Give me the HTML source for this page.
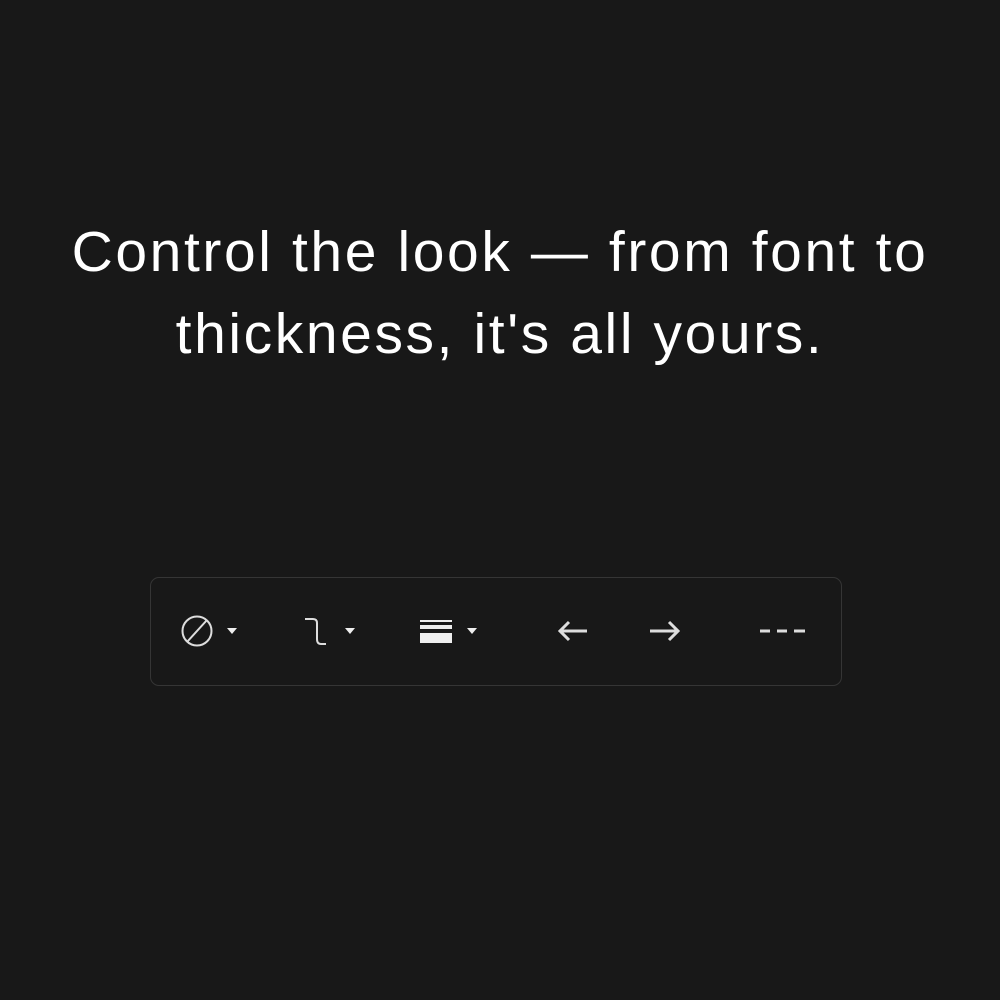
<!DOCTYPE html>
<html><head><style>
body{margin:0;width:1000px;height:1000px;background:#181818;overflow:hidden;font-family:"Liberation Sans",sans-serif;}
h1{position:absolute;top:211px;left:0;width:1000px;margin:0;text-align:center;color:#fff;font-weight:normal;font-size:57px;line-height:82px;letter-spacing:2.6px;}
.bar{position:absolute;left:150px;top:577px;width:690px;height:107px;border:1.5px solid #353535;border-radius:9px;}
svg{position:absolute;left:0;top:0}
</style></head><body>
<h1>Control the look — from font to<br>thickness, it's all yours.</h1>
<div class="bar"></div>
<svg width="1000" height="1000">
<g stroke="#ddd" fill="none" stroke-width="2">
<circle cx="197" cy="631" r="14.5"/>
<line x1="187" y1="642" x2="207" y2="620"/>
<path d="M305 619 H313 Q317 619 317 623 V639 Q317 644 321 644 H326"/>
<path d="M560 631 H587 M569 622 L560 631 L569 640" stroke-width="3"/>
<path d="M650 631 H678 M669 622 L678 631 L669 640" stroke-width="3"/>
<path d="M760 631 H770 M777 631 H787 M794 631 H805" stroke-width="3"/>
</g>
<g fill="#eee">
<path d="M227 628 H237 L232 634 Z"/>
<path d="M345 628 H355 L350 634 Z"/>
<path d="M467 628 H477 L472 634 Z"/>
<rect x="420" y="620" width="32" height="2"/>
<rect x="420" y="625" width="32" height="4"/>
<rect x="420" y="633" width="32" height="10"/>
</g>
</svg>
</body></html>
